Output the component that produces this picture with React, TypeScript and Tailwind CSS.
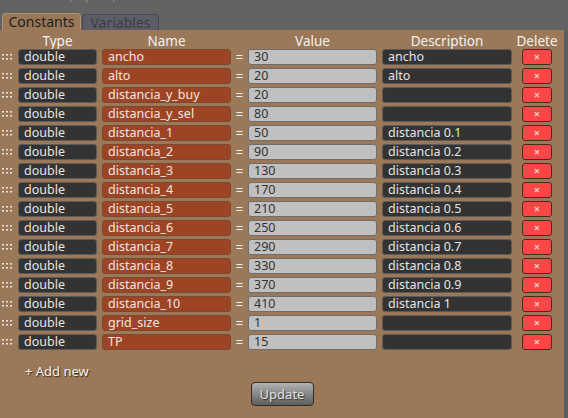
import React from "react";

type Row = { type: string; name: string; value: string; desc: string };

const rows: Row[] = [
  { type: "double", name: "ancho", value: "30", desc: "ancho" },
  { type: "double", name: "alto", value: "20", desc: "alto" },
  { type: "double", name: "distancia_y_buy", value: "20", desc: "" },
  { type: "double", name: "distancia_y_sel", value: "80", desc: "" },
  { type: "double", name: "distancia_1", value: "50", desc: "distancia 0.1" },
  { type: "double", name: "distancia_2", value: "90", desc: "distancia 0.2" },
  { type: "double", name: "distancia_3", value: "130", desc: "distancia 0.3" },
  { type: "double", name: "distancia_4", value: "170", desc: "distancia 0.4" },
  { type: "double", name: "distancia_5", value: "210", desc: "distancia 0.5" },
  { type: "double", name: "distancia_6", value: "250", desc: "distancia 0.6" },
  { type: "double", name: "distancia_7", value: "290", desc: "distancia 0.7" },
  { type: "double", name: "distancia_8", value: "330", desc: "distancia 0.8" },
  { type: "double", name: "distancia_9", value: "370", desc: "distancia 0.9" },
  { type: "double", name: "distancia_10", value: "410", desc: "distancia 1" },
  { type: "double", name: "grid_size", value: "1", desc: "" },
  { type: "double", name: "TP", value: "15", desc: "" },
];

const field =
  "h-[16px] rounded-[3px] border px-[5px] text-[12.5px] leading-[14px] flex items-center overflow-hidden whitespace-nowrap";

function DragHandle() {
  return (
    <svg width="10" height="8" viewBox="0 0 10 8" className="block">
      {[1, 5, 9].map((x) =>
        [2, 6].map((y) => <rect key={`${x}-${y}`} x={x - 1} y={y - 1} width="2" height="1.6" fill="#e2e2e2" />)
      )}
    </svg>
  );
}

function DataRow({ r }: { r: Row }) {
  return (
    <div className="flex items-center h-[16px]">
      <div className="w-[18px] pl-[2px] flex items-center">
        <DragHandle />
      </div>
      <div className={`${field} w-[79px] bg-[#333333] border-[#5b5b5b] text-[#e4e4e4]`}>{r.type}</div>
      <div className="w-[5px]" />
      <div className={`${field} w-[129px] bg-[#9d4424] border-[#7b4a33] text-[#f0e6e0]`}>{r.name}</div>
      <div className="w-[17px] text-center text-[#eeeeee] text-[13px] leading-[14px]">=</div>
      <div className={`${field} w-[129px] bg-[#c0c0c0] border-[#6e6e6e] text-[#333333]`}>{r.value}</div>
      <div className="w-[5px]" />
      <div className={`${field} w-[130px] bg-[#333333] border-[#5b5b5b] text-[#e4e4e4]`}>{r.desc}</div>
      <div className="w-[10px]" />
      <button className="h-[16px] w-[30px] rounded-[3px] border border-[#4a2a1e] bg-[#ff4646] text-[#f3c6c6] text-[11px] leading-[12px] flex items-center justify-center font-bold">
        ×
      </button>
    </div>
  );
}

export default function App() {
  return (
    <div
      className="w-[568px] h-[418px] bg-[#636363] flex flex-col overflow-hidden relative"
      style={{ fontFamily: '"Noto Sans", "Open Sans", sans-serif' }}
    >
      {/* window title, scrolled partially out of view */}
      <div className="absolute left-[4px] top-[-13px] text-[13px] leading-[16px] text-[#8c8c8c] whitespace-nowrap">
        Constants (Inputs) / Variables
      </div>
      <div className="absolute right-[0px] top-[-12px] text-[12px] leading-[16px] text-[#2e2e2e]">00</div>

      {/* tab strip */}
      <div className="h-[30px] flex items-end pl-[2px] gap-[1px]">
        <div className="h-[17px] w-[79px] rounded-t-[4px] bg-[#9b7858] border border-b-0 border-[#b0906e] text-[#1e1e1e] text-[14px] leading-[16px] flex items-center justify-center">
          Constants
        </div>
        <div className="h-[16px] w-[77px] rounded-t-[4px] bg-[#5b5e68] border border-b-0 border-[#474a52] text-[#3d3d40] text-[14px] leading-[15px] flex items-center justify-center">
          Variables
        </div>
      </div>

      {/* tab body */}
      <div className="flex-1 flex">
        <div className="w-[564px] bg-[#9b7858] flex flex-col">
          <div className="flex h-[19px] items-end text-[#f2f2f2] text-[13.5px] leading-[16px]">
            <div className="w-[18px]" />
            <div className="w-[79px] text-center">Type</div>
            <div className="w-[5px]" />
            <div className="w-[129px] text-center">Name</div>
            <div className="w-[17px]" />
            <div className="w-[129px] text-center">Value</div>
            <div className="w-[5px]" />
            <div className="w-[130px] text-center">Description</div>
            <div className="w-[10px]" />
            <div className="w-[30px] flex justify-center whitespace-nowrap">Delete</div>
          </div>
          <div className="flex flex-col gap-[3px]">
            {rows.map((r, i) => (
              <DataRow key={i} r={r} />
            ))}
          </div>
          <div
            className="mt-[13px] ml-[25px] text-[13px] leading-[16px] text-[#f2f2f2]"
            style={{ textShadow: "1px 1px 1px #3a2a1a" }}
          >
            + Add new
          </div>
          <div className="flex justify-center mt-[3px]">
            <button
              className="h-[24px] w-[63px] rounded-[4px] border border-[#2e2e2e] bg-gradient-to-b from-[#b3b3b3] to-[#5e5e5e] text-[#e0e0e0] text-[13px] leading-[16px]"
              style={{ textShadow: "1px 1px 1px #333" }}
            >
              Update
            </button>
          </div>
        </div>
        <div className="flex-1 bg-[#5f5f5f]" />
      </div>
    </div>
  );
}
